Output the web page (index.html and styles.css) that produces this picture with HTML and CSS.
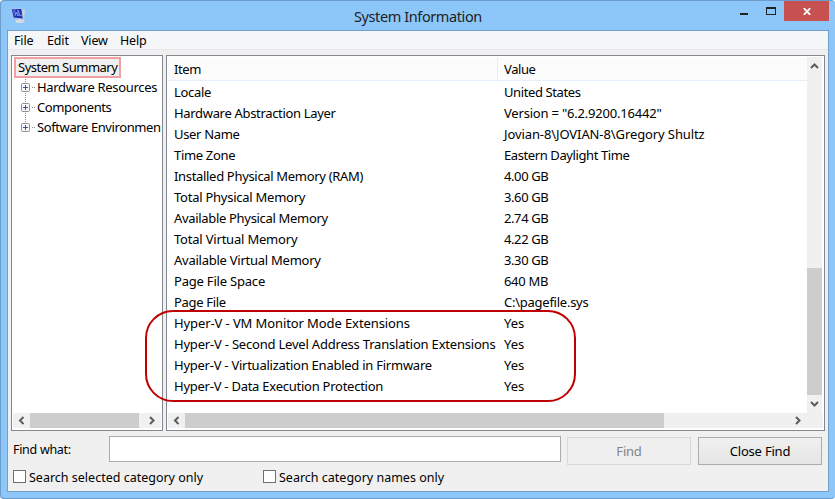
FILE: index.html
```html
<!DOCTYPE html>
<html lang="en">
<head>
<meta charset="utf-8">
<title>System Information</title>
<link rel="stylesheet" href="styles.css">
</head>
<body>
<div class="window">
  <header class="titlebar">
    <svg class="app-icon" width="16" height="18" viewBox="0 0 16 18">
      <path d="M5 13l4-1 4 1 1 1-3 2H6l-2-2z" fill="#d8dbe2"/>
      <path d="M11 2l3 1-1 10-2 1z" fill="#c9d0dc"/>
      <path d="M0 1.500L11 1l1.500 11.500L2 11z" fill="#b4c3e3"/>
      <path d="M.7 2.200L10.300 2l1.400 9.600-9-1.200z" fill="#1c2fae"/>
      <path d="M1 2.200L5 2 3 8z" fill="#4a66d8"/>
      <path d="M4 9l1-4 2 4V3l2 6 2-1" fill="none" stroke="#7f9cee"/>
    </svg>
    <h1 class="title">System Information</h1>
    <div class="controls">
      <svg width="46" height="20" viewBox="0 0 46 20"><path d="M2 12h8v2H2z" fill="#222"/><path d="M28 6h10v2H28zM28 8h1v6h-1zM37 8h1v6h-1zM28 13h10v1H28z" fill="#222"/></svg>
      <div class="close"><svg width="8" height="7" viewBox="0 0 8 7"><path d="M.8.2l6.400 6.600M7.200.2L.8 6.800" stroke="#fff" stroke-width="1.900"/></svg></div>
    </div>
  </header>
  <main class="client">
    <nav class="menu"><span class="m-file">File</span><span class="m-edit">Edit</span><span class="m-view">View</span><span>Help</span></nav>
    <div class="panes">
      <section class="pane tree-pane">
        <div class="tree">
          <div class="root">System Summary</div>
          <div class="node"><svg class="expander" width="16" height="20" viewBox="0 0 16 20"><path d="M4.500 0v5M4.500 16v4M11 10.500h4" stroke="#888" stroke-dasharray="1 1"/><rect x=".5" y="6.500" width="8" height="8" rx="1" fill="#f8f8f8" stroke="#919191"/><path d="M2 10.500h5M4.500 8v5" stroke="#34559a"/></svg><span class="t1">Hardware Resources</span></div>
          <div class="node"><svg class="expander" width="16" height="20" viewBox="0 0 16 20"><path d="M4.500 0v5M4.500 16v4M11 10.500h4" stroke="#888" stroke-dasharray="1 1"/><rect x=".5" y="6.500" width="8" height="8" rx="1" fill="#f8f8f8" stroke="#919191"/><path d="M2 10.500h5M4.500 8v5" stroke="#34559a"/></svg><span class="t4">Components</span></div>
          <div class="node"><svg class="expander" width="16" height="20" viewBox="0 0 16 20"><path d="M4.500 0v5M11 10.500h4" stroke="#888" stroke-dasharray="1 1"/><rect x=".5" y="6.500" width="8" height="8" rx="1" fill="#f8f8f8" stroke="#919191"/><path d="M2 10.500h5M4.500 8v5" stroke="#34559a"/></svg><span class="t4">Software Environment</span></div>
        </div>
        <div class="hscroll">
          <svg width="17" height="15" viewBox="0 0 17 15"><path d="M10.500 4L7 7.500l3.500 3.500" fill="none" stroke="#5c5c5c" stroke-width="2"/></svg>
          <div class="thumb tree-thumb"></div>
          <svg width="17" height="15" viewBox="0 0 17 15"><path d="M6 4l3.500 3.500L6 11" fill="none" stroke="#5c5c5c" stroke-width="2"/></svg>
        </div>
      </section>
      <section class="pane list-pane">
        <div class="list-area">
          <div class="list">
            <div class="row head"><span>Item</span><span>Value</span></div>
            <div class="row"><span class="t3">Locale</span><span class="t4">United States</span></div>
            <div class="row"><span class="t3">Hardware Abstraction Layer</span><span class="t2">Version = "6.2.9200.16442"</span></div>
            <div class="row"><span class="t3">User Name</span><span class="t1">Jovian-8\JOVIAN-8\Gregory Shultz</span></div>
            <div class="row"><span class="t3">Time Zone</span><span class="t4">Eastern Daylight Time</span></div>
            <div class="row"><span class="t3">Installed Physical Memory (RAM)</span><span class="t4">4.00 GB</span></div>
            <div class="row"><span class="t25">Total Physical Memory</span><span class="t4">3.60 GB</span></div>
            <div class="row"><span class="t3">Available Physical Memory</span><span class="t4">2.74 GB</span></div>
            <div class="row"><span class="t2">Total Virtual Memory</span><span class="t4">4.22 GB</span></div>
            <div class="row"><span class="t25">Available Virtual Memory</span><span class="t4">3.30 GB</span></div>
            <div class="row"><span class="t2">Page File Space</span><span class="t3">640 MB</span></div>
            <div class="row"><span class="t3">Page File</span><span class="t25">C:\pagefile.sys</span></div>
            <div class="row"><span class="t1">Hyper-V - VM Monitor Mode Extensions</span><span>Yes</span></div>
            <div class="row"><span class="t2">Hyper-V - Second Level Address Translation Extensions</span><span>Yes</span></div>
            <div class="row"><span class="t25">Hyper-V - Virtualization Enabled in Firmware</span><span>Yes</span></div>
            <div class="row"><span class="t25">Hyper-V - Data Execution Protection</span><span>Yes</span></div>
          </div>
          <div class="vscroll">
            <svg width="15" height="17" viewBox="0 0 15 17"><path d="M4 11l3.500-3.500L11 11" fill="none" stroke="#5c5c5c" stroke-width="2"/></svg>
            <div class="vthumb"></div>
            <svg width="15" height="18" viewBox="0 0 15 18"><path d="M4 7l3.500 3.500L11 7" fill="none" stroke="#5c5c5c" stroke-width="2"/></svg>
          </div>
        </div>
        <div class="hscroll">
          <svg width="17" height="15" viewBox="0 0 17 15"><path d="M10.500 4L7 7.500l3.500 3.500" fill="none" stroke="#5c5c5c" stroke-width="2"/></svg>
          <div class="thumb list-thumb"></div>
          <svg width="17" height="15" viewBox="0 0 17 15"><path d="M6 4l3.500 3.500L6 11" fill="none" stroke="#5c5c5c" stroke-width="2"/></svg>
        </div>
      </section>
    </div>
    <div class="find-row">
      <label class="find-label">Find what:</label>
      <div class="find-input"></div>
      <div class="btn disabled">Find</div>
      <div class="btn">Close Find</div>
    </div>
    <div class="checks">
      <div class="check"><i class="box"></i><span>Search selected category only</span></div>
      <div class="check"><i class="box"></i><span>Search category names only</span></div>
    </div>
  </main>
  <div class="highlight"></div>
</div>
</body>
</html>
```
FILE: styles.css
```css
* { box-sizing: border-box; }
body { margin: 0; background: #fff; font: 13px/20px "Noto Sans", sans-serif; color: #000; }
svg { display: block; flex: none; }
.window { position: relative; width: 835px; height: 499px; padding: 0 6px 0 7px; background: #8dc7f9; border: 1px solid #6b9ccb; border-left-width: 0; border-right-width: 0; border-radius: 4px; overflow: hidden; box-shadow: inset 1px 0 #6b9ccb; }
.titlebar { height: 29px; display: flex; padding-left: 4px; }
.app-icon { margin-top: 6px; }
.title { margin: 4px 0 0; flex: 1; padding-left: 327px; font-size: 14.500px; letter-spacing: -.4px; font-weight: 400; line-height: 22px; color: #222; white-space: nowrap; }
.controls { display: flex; }
.close { width: 45px; height: 20px; background: #c75050; display: flex; align-items: center; justify-content: center; }
.client { width: 822px; height: 462px; border: 1px solid #6f9fca; background: #f0f0f0; }
.menu { height: 19px; display: flex; background: #f5f6f7; border-bottom: 1px solid #e8e8e8; padding-left: 6px; line-height: 20px; font-size: 12.500px; letter-spacing: -.15px; }
.m-file { width: 33px; }
.m-edit { width: 34px; }
.m-view { width: 39px; }
.panes { display: flex; gap: 3px; padding: 5px 3px 0; }
.pane { height: 376px; background: #fff; border: 1px solid #828790; padding: 1px; display: flex; flex-direction: column; }
.tree-pane { width: 152px; }
.list-pane { width: 659px; }
.tree { flex: 1; overflow: hidden; white-space: nowrap; }
.root { width: 107px; height: 21px; margin: 0 0 -1px 1px; border: 2px solid #f0a0a5; background: #f0f0f0; line-height: 17px; padding-left: 2px; letter-spacing: -.5px; }
.node { height: 20px; display: flex; padding-left: 8px; line-height: 20px; }
.hscroll { height: 15px; display: flex; background: #f0f0f0; margin-bottom: 1px; }
.thumb { background: #cdcdcd; height: 15px; }
.tree-thumb { width: 110px; margin-right: 5px; }
.list-thumb { width: 479px; margin-right: 126px; }
.list-area { flex: 1; display: flex; min-height: 0; }
.list { width: 639px; white-space: nowrap; }
.row { display: grid; grid-template-columns: 330px 1fr; height: 21px; line-height: 21px; padding-left: 6px; }
.head { height: 24px; margin-bottom: 1px; line-height: 25px; background: #fcfcfc; border-bottom: 1px solid #e5effb; grid-template-columns: 323px 1fr; letter-spacing: -.4px; }
.head span + span { border-left: 1px solid #e5effb; padding-left: 6px; }
.t1 { letter-spacing: -.1px; }
.t2 { letter-spacing: -.2px; }
.t25 { letter-spacing: -.25px; }
.t3 { letter-spacing: -.32px; }
.t4 { letter-spacing: -.4px; }
.node .t1 { letter-spacing: -.32px; }
.vscroll { width: 15px; background: #f0f0f0; display: flex; flex-direction: column; }
.vthumb { height: 127px; background: #cdcdcd; margin-top: auto; }
.find-row { display: flex; height: 33px; padding: 5px 0 0 5px; }
.find-label { width: 96px; line-height: 27px; font-size: 12.500px; letter-spacing: -.3px; }
.find-input { width: 452px; height: 26px; background: #fff; border: 1px solid #ababab; margin-right: 6px; }
.btn { width: 124px; height: 28px; margin: 1px 7px 0 0; border: 1px solid #acacac; background: linear-gradient(#f0f0f0, #e5e5e5); line-height: 27px; text-align: center; letter-spacing: -.2px; }
.find-label, .find-input, .btn { flex: none; }
.disabled { background: #efefef; border-color: #d9d9d9; color: #838383; }
.checks { display: flex; padding-left: 5px; height: 24px; }
.check { width: 250px; display: flex; font-size: 12.500px; line-height: 27px; white-space: nowrap; }
.box { width: 13px; height: 13px; border: 1px solid #707070; background: #fff; margin: 6px 3px 0 0; }
.highlight { position: absolute; left: 145px; top: 309px; width: 431px; height: 92px; border: 2px solid #c00000; border-radius: 28px; }
```
